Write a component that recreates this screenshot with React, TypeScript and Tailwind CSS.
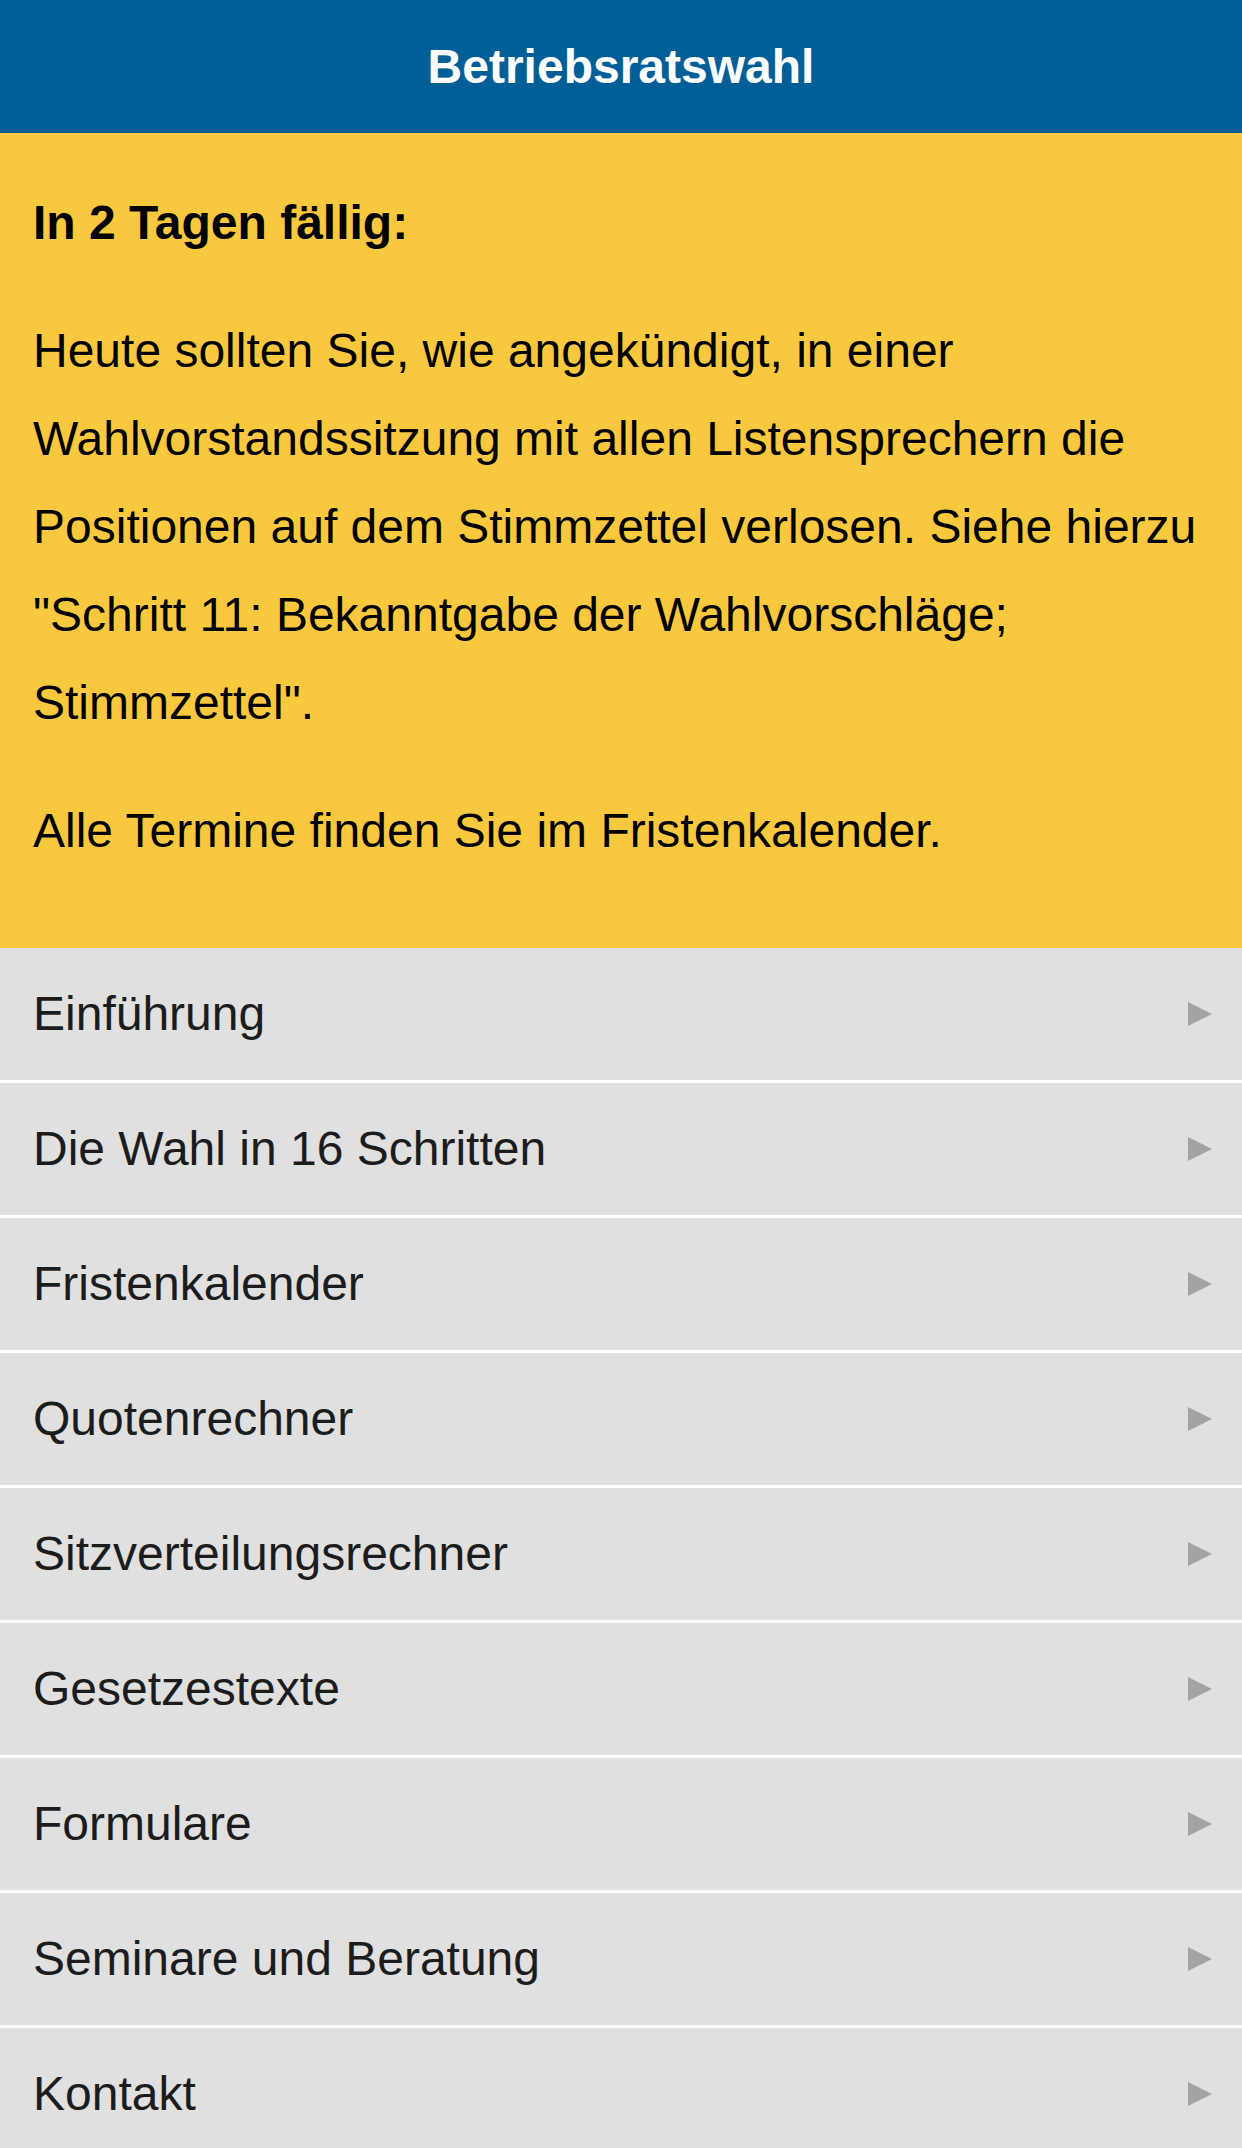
const menuItems = [
  'Einführung',
  'Die Wahl in 16 Schritten',
  'Fristenkalender',
  'Quotenrechner',
  'Sitzverteilungsrechner',
  'Gesetzestexte',
  'Formulare',
  'Seminare und Beratung',
  'Kontakt',
];

function Chevron() {
  return (
    <svg width="24" height="24" viewBox="0 0 24 24" className="shrink-0">
      <polygon points="0,0 24,12 0,24" fill="#a3a3a3" />
    </svg>
  );
}

export default function App() {
  return (
    <div className="w-full min-h-screen bg-[#e0e0e0] font-['Liberation_Sans',Arial,sans-serif]">
      {/* Title bar */}
      <header className="h-[133px] bg-[#025e96] flex items-center justify-center">
        <h1 className="text-white font-bold text-[48px] leading-none">Betriebsratswahl</h1>
      </header>

      {/* Due notice */}
      <section className="bg-[#f8c93f] text-black pl-[33px] pr-[24px] pt-[46px] pb-[73px] text-[48px] leading-[88px]">
        <p className="font-bold mb-[40px]">In 2 Tagen fällig:</p>
        <p className="mb-[40px]">
          Heute sollten Sie, wie angekündigt, in einer Wahlvorstandssitzung mit allen Listensprechern die
          Positionen auf dem Stimmzettel verlosen. Siehe hierzu "Schritt 11: Bekanntgabe der Wahlvorschläge;
          Stimmzettel".
        </p>
        <p>Alle Termine finden Sie im Fristenkalender.</p>
      </section>

      {/* Navigation list */}
      <nav>
        {menuItems.map((item) => (
          <div
            key={item}
            className="h-[135px] bg-[#e0e0e0] border-b-[3px] border-white flex items-center justify-between pl-[33px] pr-[30px]"
          >
            <span className="text-[48px] leading-none text-[#1c1c1c]">{item}</span>
            <Chevron />
          </div>
        ))}
      </nav>
    </div>
  );
}
